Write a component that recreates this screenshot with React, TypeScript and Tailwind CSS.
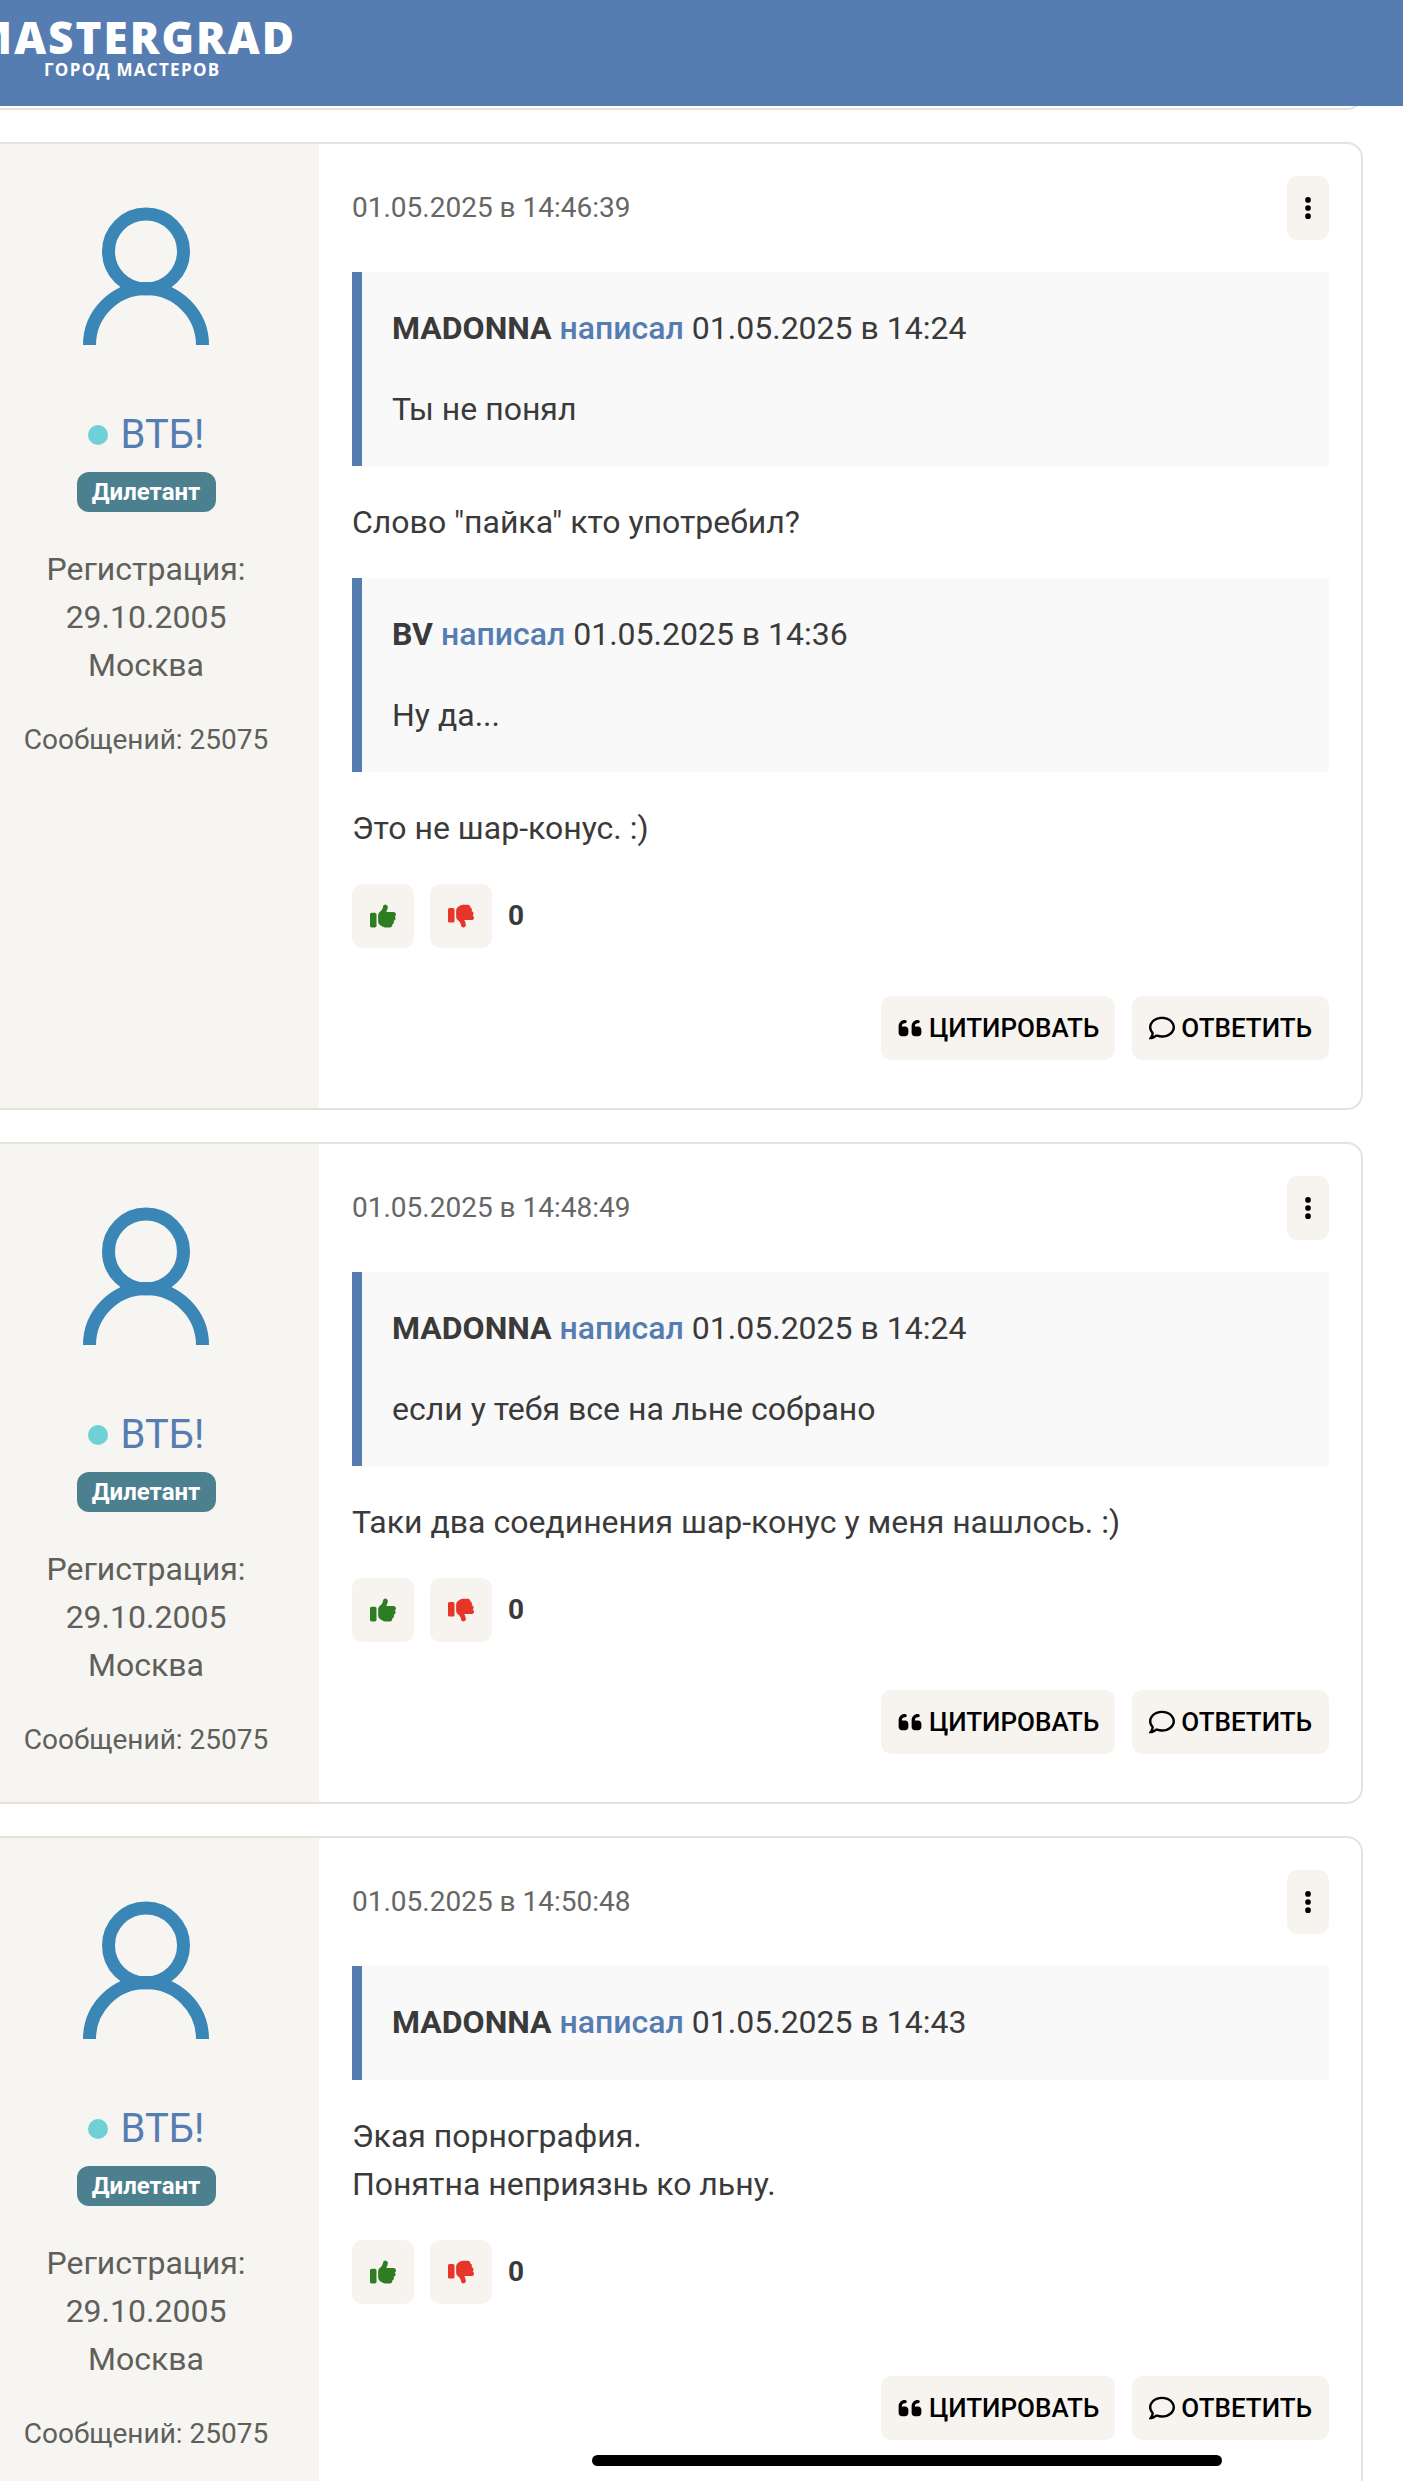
import React from "react";
import { FaEllipsisVertical, FaQuoteLeft, FaRegComment, FaThumbsDown, FaThumbsUp } from "react-icons/fa6";

type Quote = { author: string; date: string; text?: string };
type Block = { quote?: Quote; lines?: string[] };
type PostData = { date: string; blocks: Block[]; edited?: boolean };

const posts: PostData[] = [
  {
    date: "01.05.2025 в 14:46:39",
    blocks: [
      { quote: { author: "MADONNA", date: "01.05.2025 в 14:24", text: "Ты не понял" } },
      { lines: ['Слово "пайка" кто употребил?'] },
      { quote: { author: "BV", date: "01.05.2025 в 14:36", text: "Ну да..." } },
      { lines: ["Это не шар-конус. :)"] },
    ],
  },
  {
    date: "01.05.2025 в 14:48:49",
    blocks: [
      { quote: { author: "MADONNA", date: "01.05.2025 в 14:24", text: "если у тебя все на льне собрано" } },
      { lines: ["Таки два соединения шар-конус у меня нашлось. :)"] },
    ],
  },
  {
    date: "01.05.2025 в 14:50:48",
    edited: true,
    blocks: [
      { quote: { author: "MADONNA", date: "01.05.2025 в 14:43" } },
      { lines: ["Экая порнография.", "Понятна неприязнь ко льну."] },
    ],
  },
];

function Avatar() {
  return (
    <svg width="130" height="140" viewBox="0 0 130 140" fill="none" stroke="#3a86b7" strokeWidth="13">
      <circle cx="65" cy="44.5" r="37.5" />
      <path d="M8.5 138 A56.5 56.5 0 0 1 121.5 138" />
    </svg>
  );
}

function Sidebar() {
  return (
    <aside className="flex w-[346px] shrink-0 flex-col items-center bg-[#f6f5f1] pt-[63px] text-center text-[#5f5f5b]">
      <Avatar />
      <div className="mt-[59px] flex h-[58px] items-center gap-[13px]">
        <span className="h-5 w-5 rounded-full bg-[#6fd0d6]"></span>
        <span className="text-[40px] leading-[58px] text-[#567db1]">ВТБ!</span>
      </div>
      <span className="mt-[8px] flex h-10 w-[139px] items-center justify-center rounded-xl bg-[#4c808f] text-[24px] font-bold text-white">Дилетант</span>
      <div className="mt-[33px] text-[32px] leading-[48px]">
        <div>Регистрация:</div>
        <div>29.10.2005</div>
        <div>Москва</div>
      </div>
      <div className="mt-[30px] pb-[40px] text-[28px] leading-[42px]">Сообщений: 25075</div>
    </aside>
  );
}

function QuoteBox({ quote }: { quote: Quote }) {
  return (
    <blockquote className="flex flex-col gap-8 border-l-[10px] border-[#567db1] bg-[#f9f9f9] py-[33px] pr-8 pl-[30px]">
      <div className="pb-[2px] leading-[46px]">
        <span className="font-bold">{quote.author}</span> <span className="font-medium text-[#567db1]">написал</span> {quote.date}
      </div>
      {quote.text && <div>{quote.text}</div>}
    </blockquote>
  );
}

function Post({ post }: { post: PostData }) {
  return (
    <article className="mt-8 -ml-[29px] flex w-[1392px] overflow-hidden rounded-2xl border-2 border-[#e6e3da] bg-white">
      <Sidebar />
      <div className="min-w-0 flex-1 pt-8 pr-8 pb-12 pl-[33px] text-[32px] leading-[48px] text-[#3a3a3a]">
        <div className="flex items-center justify-between">
          <span className="text-[28px] text-[#666666]">{post.date}</span>
          <button className="flex h-16 w-[42px] items-center justify-center rounded-[10px] bg-[#f7f4f0] text-[26px] text-black">
            <FaEllipsisVertical />
          </button>
        </div>
        <div className="mt-8 flex flex-col gap-8">
          {post.blocks.map((block, i) =>
            block.quote ? (
              <QuoteBox key={i} quote={block.quote} />
            ) : (
              <p key={i}>
                {block.lines?.map((line) => (
                  <span key={line} className="block">{line}</span>
                ))}
              </p>
            ),
          )}
        </div>
        <div className="mt-8 flex items-center gap-4">
          <button className="flex h-16 w-[62px] items-center justify-center rounded-[10px] bg-[#f7f4f0] text-[26px] text-[#2f7d22]">
            <FaThumbsUp />
          </button>
          <button className="flex h-16 w-[62px] items-center justify-center rounded-[10px] bg-[#f7f4f0] text-[26px] text-[#e8352a]">
            <FaThumbsDown />
          </button>
          <span className="text-[28px] font-bold">0</span>
        </div>
        <div className={post.edited ? "mt-[72px] flex justify-end gap-[17px]" : "mt-12 flex justify-end gap-[17px]"}>
          <button className="flex h-16 items-center gap-[6px] rounded-[10px] bg-[#f7f4f0] px-4 text-[26px] font-medium text-black">
            <FaQuoteLeft className="text-[26px]" />
            ЦИТИРОВАТЬ
          </button>
          <button className="flex h-16 items-center gap-[6px] rounded-[10px] bg-[#f7f4f0] px-[17px] text-[26px] font-medium text-black">
            <FaRegComment className="text-[26px]" />
            ОТВЕТИТЬ
          </button>
        </div>
      </div>
    </article>
  );
}

export default function App() {
  return (
    <div className="relative h-[2481px] overflow-hidden bg-white font-[Roboto,sans-serif]">
      <header className="relative z-10 h-[106px] bg-[#567db1] font-['Open_Sans',sans-serif] text-white">
        <div className="w-[296px] pt-[11px]">
          <div className="flex justify-end text-[44px] leading-[52px] font-extrabold tracking-[2px] whitespace-nowrap">MASTERGRAD</div>
          <div className="-mt-[4px] pl-[44px] text-[17px] leading-[22px] font-bold tracking-[1.3px] whitespace-nowrap">ГОРОД МАСТЕРОВ</div>
        </div>
      </header>
      <div className="-mt-[20px] -ml-[29px] h-6 w-[1392px] rounded-b-2xl border-2 border-t-0 border-[#e6e3da]"></div>
      {posts.map((post) => (
        <Post key={post.date} post={post} />
      ))}
      <div className="absolute top-[2455px] left-[592px] h-[11px] w-[630px] rounded-full bg-black"></div>
    </div>
  );
}
